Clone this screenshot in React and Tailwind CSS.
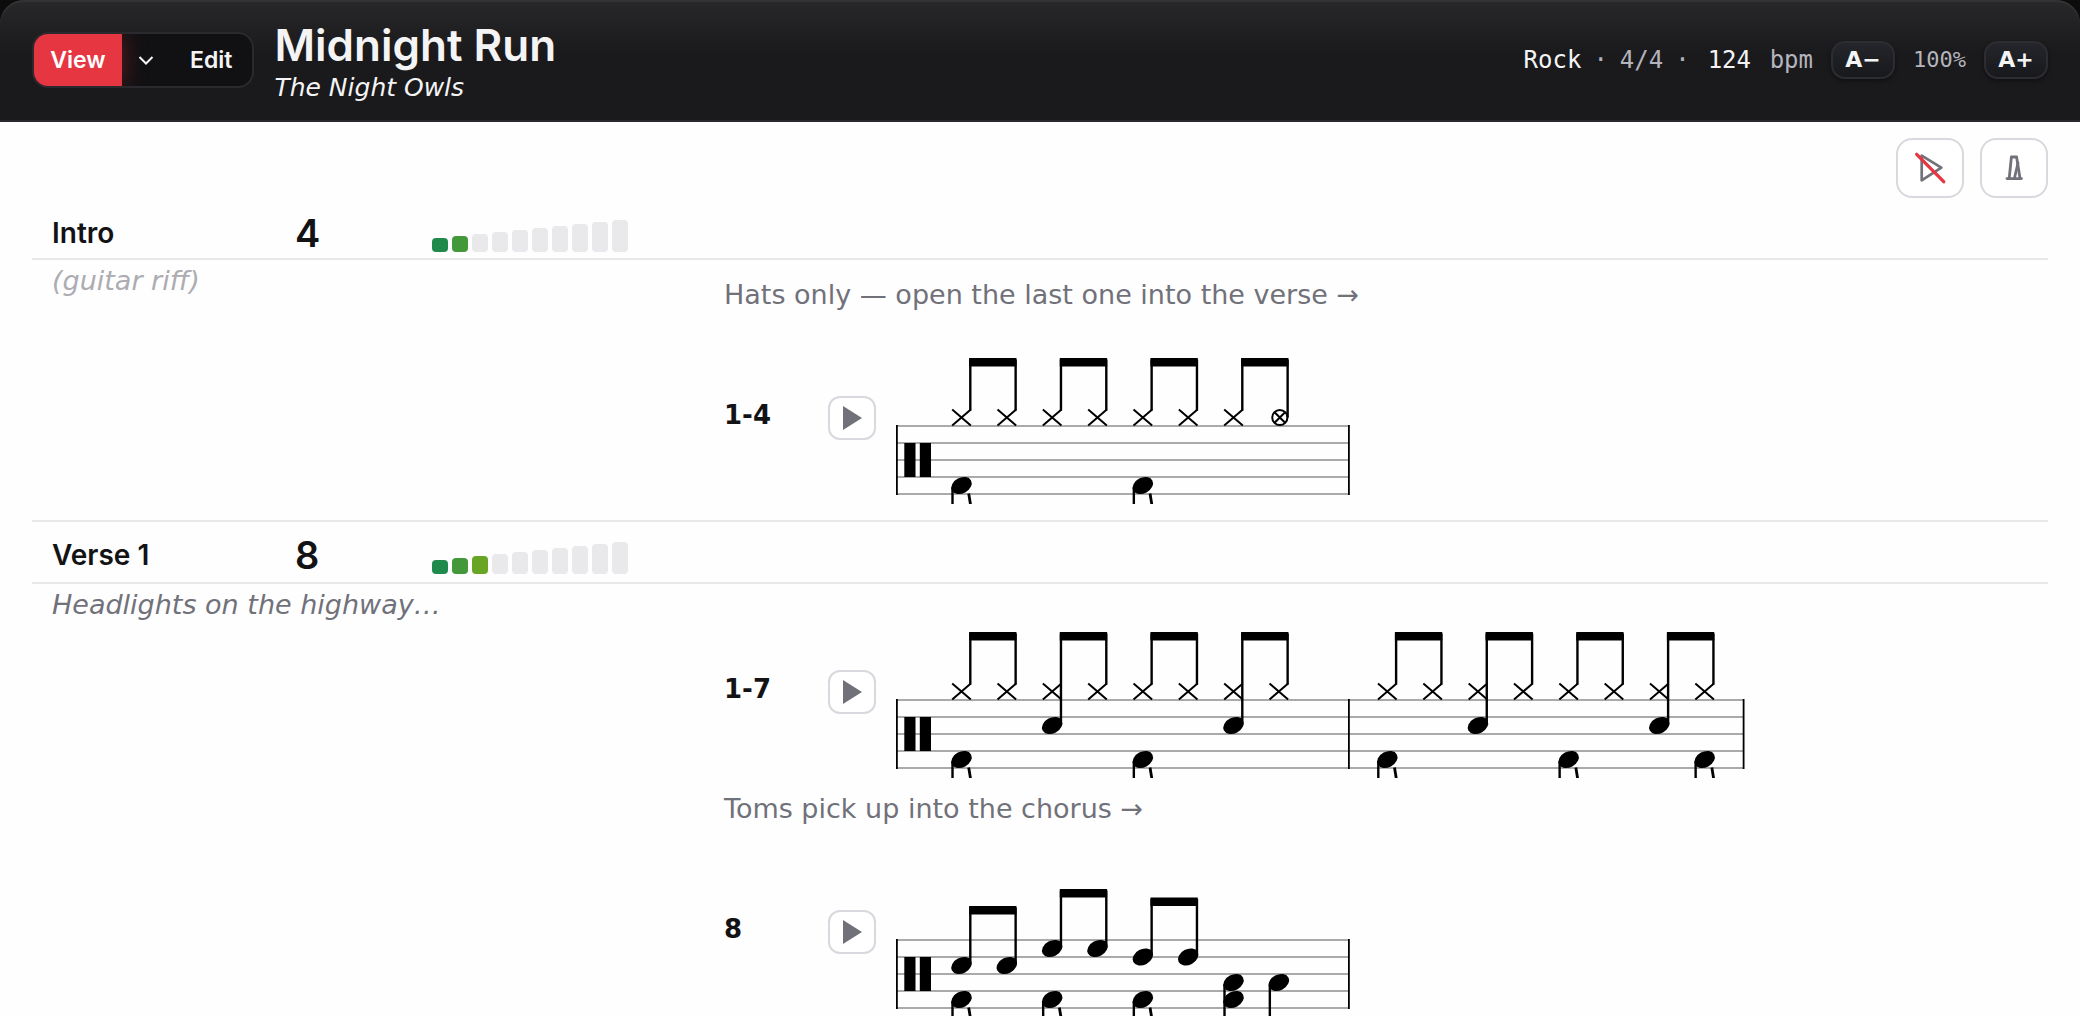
import React, { useState } from 'react'

const LEVEL_COLORS = ['bg-[#1f8a4c]', 'bg-[#43983a]', 'bg-[#69a524]']
const LEVEL_HEIGHTS = [14, 16, 18, 20, 22, 24, 26, 28, 30, 32]

// Notation geometry, in px
const STEP = 136 / 3
const STAFF_TOP = 112
const LINE_GAP = 17
const FIRST_X = 69.5
const BAR_X = [0, 425.8]
const BAR_END = [457, 851.7]

const HAT = 103.5
const HIGH_TOM = 120.5
const MID_TOM = 129
const SNARE = 137.5
const FLOOR_TOM = 154.5
const KICK = 171.5

const hats = [HAT, HAT, HAT, HAT, HAT, HAT, HAT, HAT]

const sections = [
  {
    name: 'Intro',
    bars: 4,
    level: 2,
    lyrics: '(guitar riff)',
    cue: true,
    grooves: [
      {
        label: '1-4',
        note: 'Hats only — open the last one into the verse →',
        measures: [{ hats, open: [7], snare: [], kick: [0, 4] }],
      },
    ],
  },
  {
    name: 'Verse 1',
    bars: 8,
    level: 3,
    lyrics: 'Headlights on the highway…',
    grooves: [
      {
        label: '1-7',
        measures: [
          { hats, open: [], snare: [2, 6], kick: [0, 4] },
          { hats, open: [], snare: [2, 6], kick: [0, 4, 7] },
        ],
      },
      {
        label: '8',
        note: 'Toms pick up into the chorus →',
        measures: [
          {
            toms: [SNARE, SNARE, HIGH_TOM, HIGH_TOM, MID_TOM, MID_TOM],
            floor: [6, 7],
            kick: [0, 2, 4],
            lowKick: [6],
          },
        ],
      },
    ],
  },
]

const Head = ({ x, y }) => (
  <ellipse cx={x} cy={y} rx="10.8" ry="7.8" transform={`rotate(-28 ${x} ${y})`} />
)

const Cross = ({ x, y, w = 9.3, h = 8 }) => (
  <path
    d={`M${x - w} ${y - h}L${x + w} ${y + h}M${x + w} ${y - h}L${x - w} ${y + h}`}
    stroke="#000"
    strokeWidth="2"
  />
)

const Stem = ({ x, from, to }) => (
  <line x1={x} x2={x} y1={from} y2={to} stroke="#000" strokeWidth="2.4" />
)

const Measure = ({ measure, offset }) => {
  const at = (i) => FIRST_X + offset + i * STEP
  const { hats = [], open = [], snare = [], kick = [], toms = [], floor = [], lowKick = [] } = measure
  const voices = hats.length > 0 ? hats : toms
  const pairs = voices.map((_, i) => i).filter((i) => i % 2 === 0)

  return (
    <g>
      {hats.map((y, i) =>
        open.includes(i) ? (
          <g key={i}>
            <circle cx={at(i) + 1} cy={y} r="7.6" fill="none" stroke="#000" strokeWidth="2" />
            <Cross x={at(i) + 1} y={y} w={5} h={5} />
          </g>
        ) : (
          <Cross key={i} x={at(i)} y={y} />
        )
      )}
      {toms.map((y, i) => (
        <Head key={i} x={at(i)} y={y} />
      ))}
      {snare.map((i) => (
        <Head key={i} x={at(i)} y={SNARE} />
      ))}
      {voices.map((y, i) => {
        let bottom = hats.length > 0 ? y - 7 : y - 2
        if (open.includes(i)) bottom = y
        if (snare.includes(i)) bottom = SNARE - 2
        return <Stem key={i} x={at(i) + 8.8} from={bottom} to={y - 58} />
      })}
      {pairs.map((i) => (
        <rect key={i} x={at(i) + 7.6} y={voices[i] - 59.5} width={STEP + 2} height="8.5" />
      ))}
      {kick.map((i) => (
        <g key={i}>
          <Head x={at(i)} y={KICK} />
          <Stem x={at(i) - 9} from={KICK + 2} to={200} />
          <path d={`M${at(i) + 7.2} 179.5L${at(i) + 9.4} 193`} stroke="#000" strokeWidth="2.8" />
        </g>
      ))}
      {floor.map((i) => (
        <g key={i}>
          <Head x={at(i)} y={FLOOR_TOM} />
          <Stem x={at(i) - 9} from={FLOOR_TOM + 2} to={200} />
        </g>
      ))}
      {lowKick.map((i) => (
        <Head key={i} x={at(i)} y={KICK} />
      ))}
    </g>
  )
}

const Staff = ({ measures, label }) => {
  const end = BAR_END[measures.length - 1]
  return (
    <svg width={end + 5} height="190" className="block shrink-0" role="img" aria-label={`Groove ${label}`}>
      {[0, 1, 2, 3, 4].map((i) => (
        <line
          key={i}
          x1="5"
          x2={end}
          y1={STAFF_TOP + i * LINE_GAP}
          y2={STAFF_TOP + i * LINE_GAP}
          stroke="#aaa"
          strokeWidth="1.8"
        />
      ))}
      <rect x="4" y="111" width="1.8" height="70" />
      {measures.map((_, i) => (
        <rect key={i} x={BAR_END[i] - 1} y="111" width="1.8" height="70" />
      ))}
      {/* percussion clef */}
      <rect x="12.3" y="129" width="11.2" height="34" />
      <rect x="27.8" y="129" width="11.2" height="34" />
      {measures.map((measure, i) => (
        <Measure key={i} measure={measure} offset={BAR_X[i]} />
      ))}
    </svg>
  )
}

const Groove = ({ groove }) => (
  <div>
    {groove.note && <p className="pt-3 text-[27px] leading-[38px] text-[#71717a]">{groove.note}</p>}
    <div className="flex items-start">
      <span className="w-[104px] shrink-0 pt-[82px] text-[26px] leading-[38px] font-bold">{groove.label}</span>
      <button
        type="button"
        aria-label={`Play bars ${groove.label}`}
        className="mt-[82px] mr-4 w-12 h-11 shrink-0 flex items-center justify-center rounded-xl border-2 border-[#d8d8de] bg-white"
      >
        <svg width="20" height="24" viewBox="0 0 20 24" fill="#71717a">
          <path d="M1 0L20 12L1 24z" />
        </svg>
      </button>
      <Staff measures={groove.measures} label={groove.label} />
    </div>
  </div>
)

const Section = ({ section, first }) => (
  <section className="pb-4">
    <div
      className={`grid grid-cols-[243px_137px_292px_1fr] items-start pt-1 pl-5 border-y-2 border-[#e8e8eb] ${
        first ? 'h-[62px] border-t-transparent' : 'h-16'
      }`}
    >
      <h2 className="font-[Inter,sans-serif] text-[28px] leading-[58px] font-semibold">{section.name}</h2>
      <span className="font-[Inter,sans-serif] text-[38px] leading-[58px] font-semibold">{section.bars}</span>
      <div className="mt-4 h-8 flex items-end gap-1" role="img" aria-label={`Intensity ${section.level} of 10`}>
        {LEVEL_HEIGHTS.map((height, i) => (
          <span
            key={height}
            className={`w-4 rounded ${i < section.level ? LEVEL_COLORS[i] : 'bg-[#e9e9ec]'}`}
            style={{ height }}
          />
        ))}
      </div>
    </div>
    <div className="grid grid-cols-[672px_1fr] pl-5">
      <p className={`text-[27px] leading-[42px] italic ${section.cue ? 'text-[#acacb2]' : 'text-[#71717a]'}`}>
        {section.lyrics}
      </p>
      <div className="pt-1">
        {section.grooves.map((groove) => (
          <Groove key={groove.label} groove={groove} />
        ))}
      </div>
    </div>
  </section>
)

const zoomButton =
  'w-16 h-[38px] flex items-center justify-center rounded-[14px] border-2 border-[#2c2c31] bg-linear-to-b from-[#24262b] to-[#18191d] shadow-[0_2px_4px_rgba(0,0,0,0.4)] text-[22px] font-bold text-[#f4f4f5]'

const toolButton =
  'w-[68px] h-[60px] flex items-center justify-center rounded-2xl border-2 border-[#d8d8de] bg-white'

const App = () => {
  const [bpm, setBpm] = useState('124')

  return (
    <div className="h-screen flex flex-col overflow-hidden bg-[#0c0c0d] font-['DejaVu_Sans',sans-serif] text-[#131315]">
      <header className="shrink-0 flex items-center justify-between px-8 h-[122px] rounded-t-[24px] border-b-2 border-[#2a2a2e] bg-linear-to-b from-[#28282b] to-[#1a1a1c] to-45% shadow-[inset_0_2px_0_#333336]">
        <div className="flex items-center gap-5">
          <div className="flex h-14 overflow-hidden rounded-2xl border-2 border-[#2a2a2e] bg-[#111113] font-[Inter,sans-serif] text-[23px] font-semibold text-[#f4f4f5]">
            <button type="button" className="w-[88px] bg-[#e63642] text-white shadow-[0_0_24px_rgba(230,54,66,0.35)]">
              View
            </button>
            <button type="button" aria-label="View options" className="w-12 flex items-center justify-center">
              <svg width="16" height="10" viewBox="0 0 16 10" fill="none" stroke="currentColor" strokeWidth="2">
                <path d="M1.5 2L8 8.5L14.5 2" />
              </svg>
            </button>
            <button type="button" className="px-5">Edit</button>
          </div>
          <div className="pt-[2px] text-[#f4f4f5]">
            <h1 className="font-[Inter,sans-serif] text-[44px] leading-[54px] font-semibold">Midnight Run</h1>
            <p className="text-[25px] leading-8 italic">The Night Owls</p>
          </div>
        </div>

        <div className="flex items-center gap-[18px] font-['DejaVu_Sans_Mono',monospace] text-2xl text-[#b4b4bd]">
          <div className="flex gap-3">
            <span className="text-[#f4f4f5]">Rock</span>
            <span>·</span>
            <span>4/4</span>
            <span>·</span>
          </div>
          <input
            id="bpm"
            value={bpm}
            onChange={(e) => setBpm(e.target.value)}
            className="w-11 bg-transparent text-[#f4f4f5] outline-none"
          />
          <label htmlFor="bpm">bpm</label>
          <button type="button" aria-label="Smaller text" className={`${zoomButton} font-['DejaVu_Sans',sans-serif]`}>
            A−
          </button>
          <span className="text-[22px]">100%</span>
          <button type="button" aria-label="Larger text" className={`${zoomButton} font-['DejaVu_Sans',sans-serif]`}>
            A+
          </button>
        </div>
      </header>

      <main className="flex-1 overflow-y-auto [scrollbar-width:none] bg-[#fefefe] px-8">
        <div className="flex justify-end gap-4 pt-4">
          <button type="button" aria-label="Playback off" className={toolButton}>
            <svg width="36" height="36" viewBox="0 0 36 36" fill="none" strokeLinecap="round" strokeLinejoin="round">
              <path d="M9.7 5.7L29.3 17.7L9.7 30.3z" stroke="#71717a" strokeWidth="2.7" />
              <path d="M4.7 4.3L31.7 31.7" stroke="#e63642" strokeWidth="3.3" />
            </svg>
          </button>
          <button type="button" aria-label="Metronome" className={toolButton}>
            <svg
              width="36"
              height="36"
              viewBox="0 0 36 36"
              fill="none"
              stroke="#71717a"
              strokeWidth="2.8"
              strokeLinecap="round"
              strokeLinejoin="round"
            >
              <path d="M13.2 28.3L15.4 7H20.6L24 28.3" />
              <path d="M11 28.6H25.4" />
              <path d="M18.6 27.5L22 13" />
            </svg>
          </button>
        </div>
        {sections.map((section, i) => (
          <Section key={section.name} section={section} first={i === 0} />
        ))}
      </main>
    </div>
  )
}

export default App
